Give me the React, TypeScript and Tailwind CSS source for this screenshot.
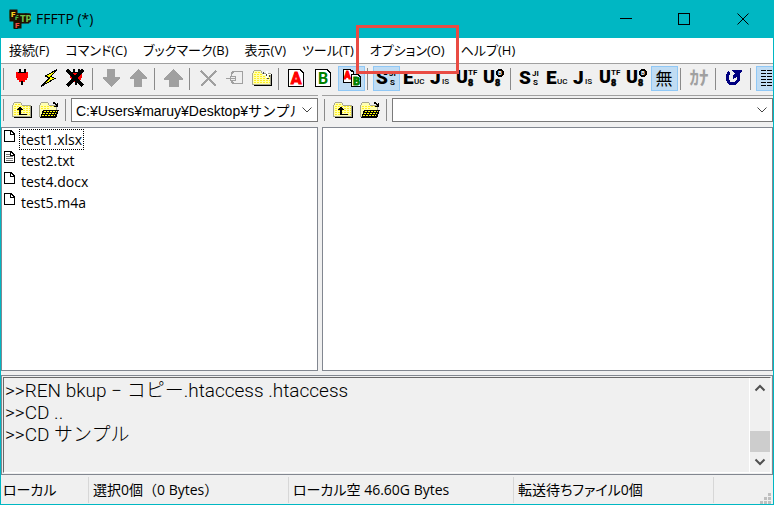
import React from "react";
import { clsx } from "clsx";

const UI_FONT = "font-['Open_Sans','Noto_Sans_CJK_JP',sans-serif]";
const GOTHIC_FONT = "font-['Liberation_Sans','Noto_Sans_CJK_JP',sans-serif]";
const NARROW_FONT = "font-['Roboto','Noto_Sans_CJK_JP',sans-serif]";

const MENUS = [
  "接続(F)",
  "コマンド(C)",
  "ブックマーク(B)",
  "表示(V)",
  "ツール(T)",
  "オプション(O)",
  "ヘルプ(H)",
];

const FILES = [
  { name: "test1.xlsx", text: false },
  { name: "test2.txt", text: true },
  { name: "test4.docx", text: false },
  { name: "test5.m4a", text: false },
];

const LOG = [
  ">>REN bkup − コピー.htaccess .htaccess",
  ">>CD ..",
  ">>CD サンプル",
];

/* ---------- icons, all drawn on the 27x25 button face ---------- */

const Face = ({ children }: { children: React.ReactNode }) => (
  <svg
    viewBox="0 0 27 25"
    className={clsx("block h-[25px] w-[27px] shrink-0", NARROW_FONT)}
    shapeRendering="crispEdges"
    aria-hidden="true"
  >
    {children}
  </svg>
);

const PlugShape = () => (
  <>
    <path d="M10 3h2v4h-2zM15 3h2v4h-2z" fill="#000" />
    <path d="M7 6h12v6h-1v2h-2v2h-6v-2h-2v-2h-1z" fill="#f00" />
    <path d="M9 6h8v1h-8zM12 15h2v4h-2z" fill="#000" />
  </>
);

const PlugIcon = () => (
  <Face>
    <PlugShape />
  </Face>
);

const BoltIcon = () => (
  <Face>
    <path
      d="M21 3.500L9.500 10L13.500 12L5 20.500L19 12.500L14.500 10.500Z"
      fill="#ff0"
      stroke="#000"
    />
  </Face>
);

const UnplugIcon = () => (
  <Face>
    <PlugShape />
    <path d="M4 4L20 20M20 4L4 20" stroke="#000" strokeWidth="3" />
  </Face>
);

const DownIcon = () => (
  <Face>
    <path d="M9 3h8v8h5v1l-8 9h-1l-8-9v-1h4z" fill="#a0a0a0" />
  </Face>
);

const UpIcon = () => (
  <Face>
    <path d="M9 21h8v-8h5v-1l-8-9h-1l-8 9v1h4z" fill="#a0a0a0" />
  </Face>
);

const MirrorIcon = () => (
  <Face>
    <path d="M9 21h10v-7h4v-1l-9-10h-1l-9 10v1h5z" fill="#a0a0a0" />
  </Face>
);

const DeleteIcon = () => (
  <Face>
    <path d="M6 5L21 20M21 5L6 20" stroke="#a0a0a0" strokeWidth="2.500" />
  </Face>
);

const RenameIcon = () => (
  <Face>
    <path
      d="M9.500 10V7.500L11.500 5.500H20.500V17.500H11.500L9.500 15.500M4 12.500H13M13.500 10.500V14.500H8.500V10.500Z"
      fill="none"
      stroke="#a0a0a0"
      strokeWidth="1.500"
    />
  </Face>
);

const FolderShape = () => (
  <>
    <path d="M5 20h18V8h-1v11H5z" fill="#000" />
    <path d="M3.500 7.500l2-3h6l2 3h8v11h-18z" fill="#ffffb0" stroke="#a8a890" />
    <path
      d="M5 8.500h16M5 10.500h16M5 12.500h16M5 14.500h16M5 16.500h16M6 6.500h6"
      stroke="#ffee20"
      strokeDasharray="2 1"
    />
  </>
);

const MakeFolderIcon = () => (
  <Face>
    <FolderShape />
    <path d="M17 5h2v7h-2zM14 8h8v1h-8z" fill="#fff" />
    <path d="M14 6h1v2h-1zM17 8h1v2h-1zM18 12h2v1h-2zM20 9h1v2h-1z" fill="#444" />
  </Face>
);

const ParentFolderIcon = () => (
  <Face>
    <FolderShape />
    <path d="M10 9v1H9v1H8v1h2v5h8v-1h-6v-4h2v-1h-1v-1h-1V9z" fill="#000" />
  </Face>
);

const OpenFolderIcon = () => (
  <Face>
    <path d="M3.500 18.500V7.500l2-3h6l2 3h7v11z" fill="#ffffb0" stroke="#a8a890" />
    <path d="M5 8.500h14M5 10.500h8" stroke="#ffee20" strokeDasharray="2 1" />
    <path d="M4 20h16l3-8H7z" fill="#000" />
    <path
      d="M8 13.500h13M7 15.500h13M6 17.500h13"
      stroke="#ff0"
      strokeDasharray="2 1"
    />
    <path d="M17 4h2v1h1v1h1V5h1v4h-4V8h2V7h-1V6h-2z" fill="#000" />
  </Face>
);

const AsciiIcon = () => (
  <Face>
    <path d="M4.500 3.500H16L19.500 7V20.500H4.500Z" fill="#fff" stroke="#000" strokeWidth="1.500" />
    <text x="12" y="18" textAnchor="middle" fontSize="16" fontWeight="700" fill="#f00" stroke="#f00">
      A
    </text>
  </Face>
);

const BinaryIcon = () => (
  <Face>
    <path d="M4.500 3.500H16L19.500 7V20.500H4.500Z" fill="#fff" stroke="#000" strokeWidth="1.500" />
    <text x="12" y="18" textAnchor="middle" fontSize="16" fontWeight="700" fill="#008000">
      B
    </text>
  </Face>
);

const AutoModeIcon = () => (
  <Face>
    <path d="M5.500 3.500H12L15.500 6V16.500H5.500Z" fill="#fff" stroke="#000" strokeWidth="1.500" />
    <text x="6" y="13" fontSize="10" fontWeight="700" fill="#f00" stroke="#f00">
      A
    </text>
    <path d="M13.500 8.500H20L22.500 11V20.500H13.500Z" fill="#fff" stroke="#000" strokeWidth="1.500" />
    <text x="15" y="19" fontSize="11" fontWeight="700" fill="#008000" stroke="#008000">
      B
    </text>
  </Face>
);

const SjisIcon = () => (
  <Face>
    <text x="3" y="18" fontSize="19" fontWeight="900">S</text>
    <text x="16" y="10" fontSize="8" fontWeight="700">JI</text>
    <text x="17" y="19" fontSize="8" fontWeight="700">S</text>
  </Face>
);

const EucIcon = () => (
  <Face>
    <text x="3" y="18" fontSize="19" fontWeight="900">E</text>
    <text x="14" y="18" fontSize="8" fontWeight="500">UC</text>
  </Face>
);

const JisIcon = () => (
  <Face>
    <text x="3" y="18" fontSize="19" fontWeight="900">J</text>
    <text x="15" y="18" fontSize="8" fontWeight="500">IS</text>
  </Face>
);

const Utf8Icon = () => (
  <Face>
    <text x="2" y="17" fontSize="18" fontWeight="900">U</text>
    <text x="14" y="9" fontSize="8" fontWeight="700">TF</text>
    <text x="14" y="20" fontSize="9" fontWeight="900" stroke="#000" strokeWidth="0.500">8</text>
  </Face>
);

const Utf8BomIcon = () => (
  <Face>
    <text x="2" y="17" fontSize="18" fontWeight="900">U</text>
    <ellipse cx="19" cy="7" rx="4" ry="4" fill="#000" />
    <text x="17" y="9" fontSize="6" fontWeight="700" fill="#fff">B</text>
    <text x="14" y="20" fontSize="9" fontWeight="900" stroke="#000" strokeWidth="0.500">8</text>
  </Face>
);

const NoConvertIcon = () => (
  <Face>
    <text x="13" y="19" textAnchor="middle" fontSize="17">無</text>
  </Face>
);

const KanaIcon = () => (
  <Face>
    <text x="13" y="19" textAnchor="middle" fontSize="19" fontWeight="700" fill="#a0a0a0">
      ｶﾅ
    </text>
  </Face>
);

const RefreshIcon = () => (
  <Face>
    <path d="M8.500 6L6.500 9V14L9 17.500H14L17 14.500V10" fill="none" stroke="#000080" strokeWidth="3" />
    <path d="M11 4h10v1l-2 2v5h-1l-2-2-2 2-2 1v-3l2-3-3-2z" fill="#000080" />
  </Face>
);

const ListViewIcon = () => (
  <Face>
    <path
      d="M5 4.500h17M5 7.500h17M5 10.500h17M5 13.500h17M5 16.500h17M5 19.500h17"
      stroke="#000"
      strokeDasharray="5 1"
    />
  </Face>
);

const FileIcon = ({ text }: { text: boolean }) => (
  <svg viewBox="0 0 13 14" className="h-3.5 w-[13px] shrink-0" shapeRendering="crispEdges" aria-hidden="true">
    <path d="M1.500 1.500H8L11.500 5V12.500H1.500Z" fill="#fff" stroke="#000" />
    <path d="M7.500 1.500V5.500H11.500" fill="none" stroke="#000" />
    {text && <path d="M3 4.500h4M3 6.500h7M3 8.500h7M3 10.500h7" stroke="#777" />}
  </svg>
);

const AppLogo = () => (
  <svg
    viewBox="0 0 22 20"
    className={clsx("h-5 w-[22px]", NARROW_FONT)}
    fontWeight="900"
    stroke="#201000"
    strokeWidth="3"
    paintOrder="stroke"
    aria-hidden="true"
  >
    <path d="M2 2h5v4h13v6h-9v6H6v-7H2z" fill="#201000" />
    <text x="6" y="11" fontSize="7" fill="#4cb848">F</text>
    <text x="11" y="13" fontSize="9" fill="#6cc04a">TP</text>
    <text x="2" y="8" fontSize="8" fill="#f8d020">F</text>
    <text x="6" y="19" fontSize="8" fill="#f05048">F</text>
  </svg>
);

const Chevron = ({ up = false, bold = false }: { up?: boolean; bold?: boolean }) => (
  <svg
    viewBox="0 0 12 8"
    className="h-2 w-3"
    fill="none"
    stroke="currentColor"
    strokeWidth={bold ? 2 : 1}
    aria-hidden="true"
  >
    <path d={up ? "M1.500 6.500L6 2L10.500 6.500" : "M1.500 1.500L6 6L10.500 1.500"} />
  </svg>
);

/* ---------- toolbar ---------- */

interface Tool {
  label: string;
  Icon: () => React.ReactElement;
  selected?: boolean;
}

const TOOL_GROUPS: Tool[][] = [
  [
    { label: "接続", Icon: PlugIcon },
    { label: "クイック接続", Icon: BoltIcon },
    { label: "切断", Icon: UnplugIcon },
  ],
  [
    { label: "ダウンロード", Icon: DownIcon },
    { label: "アップロード", Icon: UpIcon },
  ],
  [{ label: "ミラーリングアップロード", Icon: MirrorIcon }],
  [
    { label: "削除", Icon: DeleteIcon },
    { label: "名前変更", Icon: RenameIcon },
    { label: "フォルダ作成", Icon: MakeFolderIcon },
  ],
  [
    { label: "テキスト", Icon: AsciiIcon },
    { label: "バイナリ", Icon: BinaryIcon },
    { label: "自動判別", Icon: AutoModeIcon, selected: true },
  ],
  [
    { label: "ホスト Shift_JIS", Icon: SjisIcon, selected: true },
    { label: "ホスト EUC", Icon: EucIcon },
    { label: "ホスト JIS", Icon: JisIcon },
    { label: "ホスト UTF-8", Icon: Utf8Icon },
    { label: "ホスト UTF-8 BOM", Icon: Utf8BomIcon },
  ],
  [
    { label: "ローカル Shift_JIS", Icon: SjisIcon },
    { label: "ローカル EUC", Icon: EucIcon },
    { label: "ローカル JIS", Icon: JisIcon },
    { label: "ローカル UTF-8", Icon: Utf8Icon },
    { label: "ローカル UTF-8 BOM", Icon: Utf8BomIcon },
    { label: "無変換", Icon: NoConvertIcon, selected: true },
  ],
  [{ label: "半角カナ変換", Icon: KanaIcon }],
  [{ label: "最新の情報に更新", Icon: RefreshIcon }],
  [{ label: "一覧", Icon: ListViewIcon, selected: true }],
];

const Separator = () => (
  <span className="ml-0.5 mr-[5px] h-[22px] w-px shrink-0 bg-[#8a8a8a]" />
);

const ToolButton = ({ label, Icon, selected }: Tool) => (
  <button
    type="button"
    aria-label={label}
    aria-pressed={selected}
    className={clsx(
      "shrink-0",
      selected && "bg-[#c0dcf3] outline -outline-offset-1 outline-[#90c8f6]"
    )}
  >
    <Icon />
  </button>
);

const AddressBar = ({ label, path }: { label: string; path: string }) => (
  <div className="flex min-w-0 items-center border-t border-[#a0a0a0] pt-px">
    <Separator />
    <ToolButton label={`${label} 上のフォルダへ`} Icon={ParentFolderIcon} />
    <ToolButton label={`${label} フォルダを開く`} Icon={OpenFolderIcon} />
    <Separator />
    <div className="flex h-6 min-w-0 flex-1 items-center border border-[#7a7a7a] bg-white">
      <input
        type="text"
        aria-label={label}
        defaultValue={path}
        className={clsx("ml-1 mr-1.5 h-full min-w-0 flex-1 text-sm text-black outline-none", GOTHIC_FONT)}
      />
      <button type="button" aria-label={`${label} 履歴`} className="flex h-full w-4 items-center text-[#444]">
        <Chevron />
      </button>
    </div>
  </div>
);

const App = () => {
  return (
    <div
      className={clsx(
        "flex h-screen flex-col overflow-hidden border border-t-0 border-[#00b7c3] bg-[#f0f0f0] text-black",
        UI_FONT
      )}
    >
      {/* Title bar */}
      <header className="flex h-[38px] shrink-0 items-center bg-[#00b7c3] pl-2">
        <AppLogo />
        <h1 className="ml-[5px] flex-1 text-sm">FFFTP (*)</h1>
        <button type="button" aria-label="最小化" className="flex h-full w-[58px] items-center justify-center">
          <svg viewBox="0 0 12 12" className="size-3" shapeRendering="crispEdges">
            <path d="M0 5.500h12" stroke="#000" />
          </svg>
        </button>
        <button type="button" aria-label="最大化" className="flex h-full w-[58px] items-center justify-center">
          <svg viewBox="0 0 12 12" className="size-3" shapeRendering="crispEdges">
            <path d="M.5 .5h11v11h-11z" fill="none" stroke="#000" />
          </svg>
        </button>
        <button type="button" aria-label="閉じる" className="flex h-full w-[60px] items-center justify-center">
          <svg viewBox="0 0 12 12" className="size-3">
            <path d="M.5 .5l11 11M11.500 .5l-11 11" stroke="#000" />
          </svg>
        </button>
      </header>

      {/* Menu bar */}
      <nav className="flex h-[25px] shrink-0 items-center gap-4 bg-white pl-2 text-[13px] [font-feature-settings:'palt']">
        {MENUS.map((menu) => (
          <button key={menu} type="button" className="relative whitespace-nowrap">
            {menu}
            {menu.startsWith("オプション") && (
              <span className="pointer-events-none absolute -inset-x-3.5 -bottom-3.5 -top-4 z-10 border-3 border-[#e94b43]" />
            )}
          </button>
        ))}
      </nav>

      {/* Toolbar */}
      <div className="flex h-8 shrink-0 items-center overflow-hidden border-t border-[#a0a0a0] pb-0.5">
        {TOOL_GROUPS.map((group, i) => (
          <React.Fragment key={i}>
            <Separator />
            {group.map((tool) => (
              <ToolButton key={tool.label} {...tool} />
            ))}
          </React.Fragment>
        ))}
      </div>

      {/* Local / host panes */}
      <main className="grid min-h-0 flex-1 grid-cols-[317px_minmax(0,1fr)] grid-rows-[28px_minmax(0,1fr)] gap-1">
        <AddressBar label="ローカル" path="C:¥Users¥maruy¥Desktop¥サンプル" />
        <AddressBar label="ホスト" path="" />
        <ul className="overflow-hidden border border-[#828790] bg-white pt-px text-sm">
          {FILES.map((file, i) => (
            <li key={file.name} className="flex h-[21px] items-start pl-px">
              <FileIcon text={file.text} />
              <span
                className={clsx(
                  "ml-[3px] border border-dotted px-px leading-[19px]",
                  i === 0 ? "border-black" : "border-transparent"
                )}
              >
                {file.name}
              </span>
            </li>
          ))}
        </ul>
        <ul className="border border-[#828790] bg-white" />
      </main>

      {/* Log */}
      <section className="mt-1 flex h-[100px] shrink-0 border border-[#828790] p-px">
        <div className="flex min-w-0 flex-1 border border-b-white border-l-[#696969] border-r-white border-t-[#696969]">
          <div className={clsx("min-w-0 flex-1 overflow-hidden border-r border-white pl-px pt-0.5 text-[19px] font-light leading-[22px]", NARROW_FONT)}>
            {LOG.map((line) => (
              <p key={line} className="whitespace-nowrap">
                {line}
              </p>
            ))}
          </div>
          <div className="flex w-5 flex-col items-center text-[#505050]">
            <button type="button" aria-label="上へスクロール" className="flex h-5 items-center">
              <Chevron up bold />
            </button>
            <div className="mt-auto h-[21px] w-full bg-[#cdcdcd]" />
            <button type="button" aria-label="下へスクロール" className="flex h-5 items-center">
              <Chevron bold />
            </button>
          </div>
        </div>
      </section>

      {/* Status bar */}
      <footer className="mt-px flex h-7 shrink-0 items-center text-sm">
        <span className="flex h-[26px] w-[88px] items-center border-r border-[#d7d7d7] pl-0.5 [font-feature-settings:'palt']">
          ローカル
        </span>
        <span className="flex h-[26px] w-[200px] items-center border-r border-[#d7d7d7] pl-1">
          選択0個（0 Bytes）
        </span>
        <span className="flex h-[26px] w-[225px] items-center border-r border-[#d7d7d7] pl-1 [font-feature-settings:'palt']">
          ローカル空 46.60G Bytes
        </span>
        <span className="flex h-[26px] w-[200px] items-center border-r border-[#d7d7d7] pl-1 [font-feature-settings:'palt']">
          転送待ちファイル0個
        </span>
        <svg viewBox="0 0 12 12" className="ml-auto mr-0.5 size-3 self-end" fill="#bfbfbf" aria-hidden="true">
          <path d="M9 1h3v3H9zM5 5h3v3H5zM9 5h3v3H9zM1 9h3v3H1zM5 9h3v3H5zM9 9h3v3H9z" />
        </svg>
      </footer>
    </div>
  );
};

export default App;
